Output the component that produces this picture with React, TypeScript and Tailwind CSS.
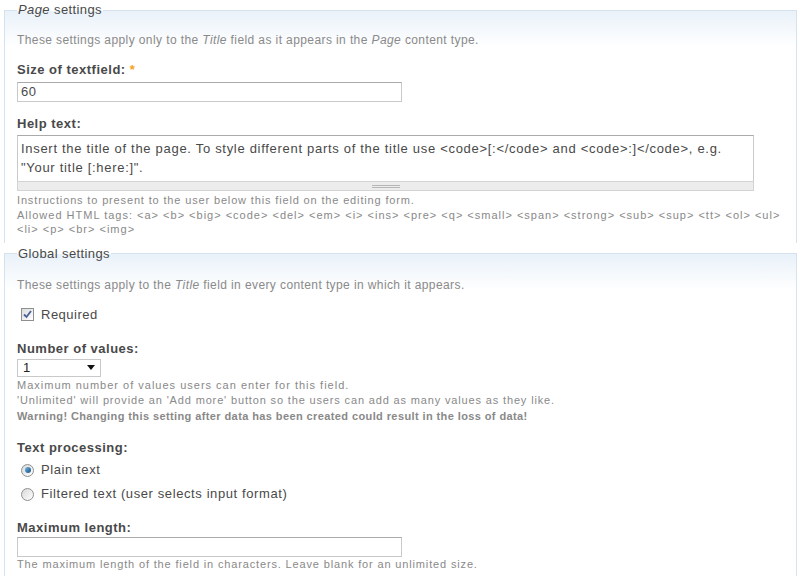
import React from "react";

const sans = "font-['Liberation_Sans','Arial',sans-serif]";
const small = "text-[11px] tracking-[0.85px] text-[#898989]";
const desc = "text-[12px] leading-[18px] tracking-[0.4px] text-[#8a8a8a]";

function Label({ children, required }: { children: React.ReactNode; required?: boolean }) {
  return (
    <div className="text-[13px] leading-4 font-bold tracking-[0.5px] text-[#494949]">
      {children}
      {required && <span className="text-[#f7a21b] ml-1">*</span>}
    </div>
  );
}

function TextInput({ value, className }: { value?: string; className?: string }) {
  return (
    <div
      className={`w-[385px] h-5 border border-[#c9c9c9] border-t-[#aaa] bg-white px-[3px] text-[13px] leading-[18px] tracking-[0.6px] text-[#494949] ${className ?? ""}`}
    >
      {value}
    </div>
  );
}

function Checkbox() {
  return (
    <span className="w-[13px] h-[13px] border border-[#8e8f8f] bg-gradient-to-br from-[#dcdcdc] to-white flex items-center justify-center">
      <svg width="9" height="9" viewBox="0 0 9 9">
        <path d="M1 4.5 L3.5 7 L8 1" fill="none" stroke="#4a5f97" strokeWidth="1.8" />
      </svg>
    </span>
  );
}

function Radio({ checked }: { checked?: boolean }) {
  return (
    <span className="w-[13px] h-[13px] rounded-full border border-[#8e8f8f] bg-gradient-to-br from-[#d9d9d9] to-white flex items-center justify-center">
      {checked && <span className="w-[6px] h-[6px] rounded-full bg-gradient-to-br from-[#6cb8e8] to-[#1b4f80]" />}
    </span>
  );
}

function Fieldset({ legend, children, className }: { legend: React.ReactNode; children: React.ReactNode; className?: string }) {
  return (
    <fieldset
      className={`mx-1 border border-[#d6e3ef] px-3 pb-2 bg-[linear-gradient(to_bottom,#e9f1f9,#ffffff_36px)] ${className ?? ""}`}
    >
      <legend className="px-px text-[13px] leading-4 tracking-[0.4px] text-[#494949]">{legend}</legend>
      {children}
    </fieldset>
  );
}

export default function App() {
  return (
    <div className={`w-[801px] h-[576px] overflow-hidden bg-white pt-[2px] ${sans}`}>
      <Fieldset legend={<><em>Page</em> settings</>} className="border-b-0 pb-[6px]">
        <p className={`mt-[13px] ${desc}`}>
          These settings apply only to the <em>Title</em> field as it appears in the <em>Page</em> content type.
        </p>

        <div className="mt-[13px]">
          <Label required>Size of textfield:</Label>
          <TextInput value="60" className="mt-1" />
        </div>

        <div className="mt-[14px]">
          <Label>Help text:</Label>
          <div className="mt-[3px] w-[737px]">
            <div className="h-[46px] border border-[#c9c9c9] border-t-[#aaa] border-b-0 bg-white px-[3px] pt-[3px] text-[13px] leading-[19px] tracking-[0.7px] text-[#494949]">
              Insert the title of the page. To style different parts of the title use &lt;code&gt;[:&lt;/code&gt; and &lt;code&gt;:]&lt;/code&gt;, e.g.
              <br />
              "Your title [:here:]".
            </div>
            <div className="h-[10px] border border-[#d4d4d4] bg-[#ececec] flex flex-col items-center justify-center gap-px">
              <span className="w-[28px] h-px bg-[#b7b7b7]" />
              <span className="w-[28px] h-px bg-[#b7b7b7]" />
            </div>
          </div>
          <div className={`mt-[2px] leading-[14.5px] ${small}`}>
            <div>Instructions to present to the user below this field on the editing form.</div>
            <div className="tracking-[1px]">
              Allowed HTML tags: &lt;a&gt; &lt;b&gt; &lt;big&gt; &lt;code&gt; &lt;del&gt; &lt;em&gt; &lt;i&gt; &lt;ins&gt; &lt;pre&gt; &lt;q&gt; &lt;small&gt; &lt;span&gt; &lt;strong&gt; &lt;sub&gt; &lt;sup&gt; &lt;tt&gt; &lt;ol&gt; &lt;ul&gt; &lt;li&gt; &lt;p&gt; &lt;br&gt; &lt;img&gt;
            </div>
          </div>
        </div>
      </Fieldset>

      <Fieldset legend="Global settings" className="mt-[3px]">
        <p className={`mt-[14px] ${desc}`}>
          These settings apply to the <em>Title</em> field in every content type in which it appears.
        </p>

        <label className="mt-[13px] ml-1 flex items-center gap-[7px] text-[13px] leading-4 tracking-[0.5px] text-[#494949]">
          <Checkbox />
          Required
        </label>

        <div className="mt-[18px]">
          <Label>Number of values:</Label>
          <div className="mt-[2px] w-[84px] h-[18px] border border-[#c9c9c9] bg-white flex items-center justify-between pl-[5px] pr-[5px] text-[13px] text-[#222]">
            <span>1</span>
            <svg width="8" height="5" viewBox="0 0 8 5">
              <path d="M0 0 H8 L4 5 Z" fill="#111" />
            </svg>
          </div>
          <div className={`mt-[1px] leading-[15.5px] ${small}`}>
            <div className="tracking-[1px]">Maximum number of values users can enter for this field.</div>
            <div>'Unlimited' will provide an 'Add more' button so the users can add as many values as they like.</div>
            <div className="font-bold tracking-[0.4px]">Warning! Changing this setting after data has been created could result in the loss of data!</div>
          </div>
        </div>

        <div className="mt-[16px]">
          <Label>Text processing:</Label>
          <label className="mt-[6px] ml-1 flex items-center gap-[7px] text-[13px] leading-4 tracking-[0.6px] text-[#494949]">
            <Radio checked />
            Plain text
          </label>
          <label className="mt-[8px] ml-1 flex items-center gap-[7px] text-[13px] leading-4 tracking-[0.6px] text-[#494949]">
            <Radio />
            Filtered text (user selects input format)
          </label>
        </div>

        <div className="mt-[18px]">
          <Label>Maximum length:</Label>
          <TextInput className="mt-px" />
          <div className={`leading-[15.5px] ${small}`}>
            The maximum length of the field in characters. Leave blank for an unlimited size.
          </div>
        </div>
      </Fieldset>
    </div>
  );
}
